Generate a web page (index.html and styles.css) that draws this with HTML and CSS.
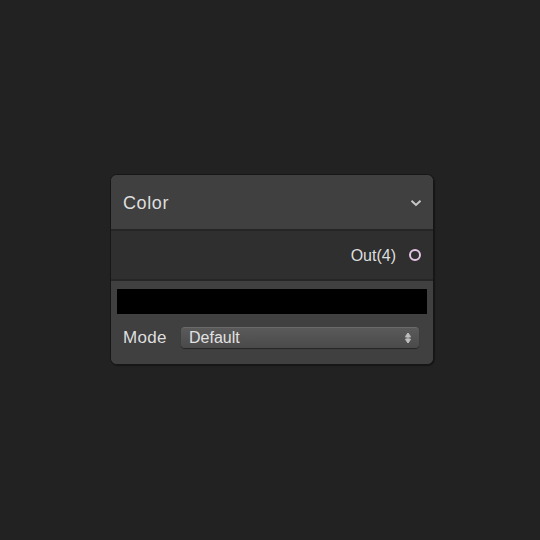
FILE: index.html
```html
<!DOCTYPE html>
<html>
<head>
<meta charset="utf-8">
<link rel="stylesheet" href="styles.css">
</head>
<body>
<div class="node">
  <div class="header">
    <span class="title">Color</span>
    <svg class="chev" width="12" height="8" viewBox="0 0 12 8"><path d="M1.5 1.8 L6 6 L10.5 1.8" fill="none" stroke="#c8c8c8" stroke-width="2"/></svg>
  </div>
  <div class="ports">
    <span class="port-label">Out(4)</span>
    <span class="port"></span>
  </div>
  <div class="body">
    <div class="swatch"></div>
    <div class="field">
      <span class="field-label">Mode</span>
      <div class="select">
        <span>Default</span>
        <svg class="arrows" width="8" height="12" viewBox="0 0 8 12"><path d="M4 1 L6.5 4.5 H1.5 Z M1.5 6 H6.5 M4 4.5 V11 M1.5 7.5 L4 11 L6.5 7.5 Z" fill="#bdbdbd" stroke="#bdbdbd" stroke-width="1"/></svg>
      </div>
    </div>
  </div>
</div>
</body>
</html>
```
FILE: styles.css
```css
html, body {
  margin: 0;
  padding: 0;
  background: #222222;
  width: 540px;
  height: 540px;
}
body {
  padding: 174px 0 0 110px;
  box-sizing: border-box;
  font-family: "Liberation Sans", Arial, sans-serif;
}
.node {
  width: 322px;
  border: 1px solid #161616;
  border-radius: 7px;
  background: #404040;
  overflow: hidden;
  box-shadow: 1px 1px 1px rgba(0,0,0,0.35);
}
.header {
  height: 54px;
  display: flex;
  align-items: center;
  justify-content: space-between;
  padding: 0 11px 0 12px;
  background: #404040;
  border-bottom: 2px solid #262626;
}
.title {
  color: #dedede;
  font-size: 18px;
  letter-spacing: 0.6px;
  margin-top: 3px;
}
.chev {
  margin-top: 1px;
}
.ports {
  height: 48px;
  display: flex;
  align-items: center;
  justify-content: flex-end;
  padding: 0 12px 0 12px;
  background: #2f2f2f;
  border-bottom: 2px solid #262626;
}
.port-label {
  color: #dedede;
  font-size: 16px;
  margin-right: 13px;
  margin-top: 2px;
}
.port {
  width: 8px;
  height: 8px;
  border: 2px solid #e4c4e4;
  border-radius: 50%;
}
.body {
  background: #404040;
  padding: 8px 6px 16px 6px;
}
.swatch {
  height: 25px;
  background: #000000;
}
.field {
  display: flex;
  align-items: center;
  margin-top: 12px;
  padding: 0 8px 0 6px;
}
.field-label {
  color: #dedede;
  font-size: 17px;
  letter-spacing: 0.3px;
  width: 58px;
  margin-top: 2px;
}
.select {
  flex: 1;
  height: 21px;
  box-sizing: border-box;
  display: flex;
  align-items: center;
  justify-content: space-between;
  padding: 0 7px 0 8px;
  border-radius: 4px;
  background: linear-gradient(#5a5a5a, #4a4a4a);
  border-top: 1px solid #6a6a6a;
  box-shadow: 0 1px 1px rgba(0,0,0,0.45);
  color: #e2e2e2;
  font-size: 16px;
}
.select span {
  margin-top: 1px;
}
```
